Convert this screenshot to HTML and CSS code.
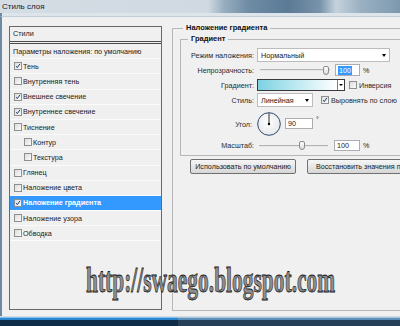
FILE: index.html
```html
<!DOCTYPE html>
<html lang="ru">
<head>
<meta charset="utf-8">
<title>Стиль слоя</title>
<link rel="stylesheet" href="styles.css">
</head>
<body>
<div class="window">
  <div class="titlebar"><span class="title">Стиль слоя</span></div>
  <div class="frame-top"></div>
  <div class="dialog">
    <div class="styles-panel">
      <div class="panel-head">Стили</div>
      <div class="panel-list">
        <div class="row plain">Параметры наложения: по умолчанию</div>
        <div class="row"><span class="cb"><svg viewBox="0 0 8 8"><polyline points="1.6,4.2 3.1,6.2 6.6,1.2"/></svg></span>Тень</div>
        <div class="row"><span class="cb"></span>Внутренняя тень</div>
        <div class="row"><span class="cb"><svg viewBox="0 0 8 8"><polyline points="1.6,4.2 3.1,6.2 6.6,1.2"/></svg></span>Внешнее свечение</div>
        <div class="row"><span class="cb"><svg viewBox="0 0 8 8"><polyline points="1.6,4.2 3.1,6.2 6.6,1.2"/></svg></span>Внутреннее свечение</div>
        <div class="row"><span class="cb"></span>Тиснение</div>
        <div class="row sub"><span class="cb"></span>Контур</div>
        <div class="row sub"><span class="cb"></span>Текстура</div>
        <div class="row"><span class="cb"></span>Глянец</div>
        <div class="row"><span class="cb"></span>Наложение цвета</div>
        <div class="row active"><span class="cb"><svg viewBox="0 0 8 8"><polyline points="1.6,4.2 3.1,6.2 6.6,1.2"/></svg></span>Наложение градиента</div>
        <div class="row"><span class="cb"></span>Наложение узора</div>
        <div class="row"><span class="cb"></span>Обводка</div>
      </div>
    </div>

    <fieldset class="group outer">
      <legend>Наложение градиента</legend>
      <fieldset class="group inner">
        <legend>Градиент</legend>
        <div class="field f1">
          <span class="lbl">Режим наложения:</span>
          <div class="select sel-mode"><span>Нормальный</span><span class="arrow"></span></div>
        </div>
        <div class="field f2">
          <span class="lbl">Непрозрачность:</span>
          <div class="slider s-opacity"><span class="track"></span><span class="thumb"></span></div>
          <div class="num n-opacity"><span class="sel">100</span></div>
          <span class="unit">%</span>
        </div>
        <div class="field f3">
          <span class="lbl">Градиент:</span>
          <div class="grad"><span class="grad-fill"></span><span class="grad-drop"><span class="arrow small"></span></span></div>
          <span class="cb cb-inv"></span><span class="cb-text">Инверсия</span>
        </div>
        <div class="field f4">
          <span class="lbl">Стиль:</span>
          <div class="select sel-style"><span>Линейная</span><span class="arrow"></span></div>
          <span class="cb cb-align"><svg viewBox="0 0 8 8"><polyline points="1.6,4.2 3.1,6.2 6.6,1.2"/></svg></span><span class="cb-text">Выровнять по слою</span>
        </div>
        <div class="field f5">
          <span class="lbl lbl-angle">Угол:</span>
          <svg class="dial" viewBox="0 0 24 24">
            <defs>
              <radialGradient id="dialfill" cx="0.45" cy="0.4" r="0.7">
                <stop offset="0" stop-color="#ffffff"/>
                <stop offset="1" stop-color="#e2e4e6"/>
              </radialGradient>
            </defs>
            <circle cx="12" cy="12" r="11.3" fill="url(#dialfill)" stroke="#2c4c6b" stroke-width="1"/>
            <line x1="12" y1="12" x2="12" y2="1.2" stroke="#1a1a1a" stroke-width="0.9"/>
            <circle cx="12" cy="12" r="1.2" fill="#000"/>
          </svg>
          <div class="num n-angle">90</div>
          <span class="deg">°</span>
        </div>
        <div class="field f6">
          <span class="lbl">Масштаб:</span>
          <div class="slider s-scale"><span class="track"></span><span class="thumb"></span></div>
          <div class="num n-scale">100</div>
          <span class="unit">%</span>
        </div>
      </fieldset>
      <div class="buttons">
        <button class="btn btn1">Использовать по умолчанию</button>
        <button class="btn btn2">Восстановить значения по умолчанию</button>
      </div>
    </fieldset>
  </div>
  <div class="taskbar"><span class="tb-btn"></span></div>
  <div class="watermark">http://swaego.blogspot.com</div>
</div>
</body>
</html>
```

FILE: styles.css
```css
* { box-sizing: border-box; }
html, body { margin: 0; padding: 0; }
body {
  width: 400px;
  height: 326px;
  overflow: hidden;
  background: #f0f0f0;
  font-family: "Liberation Sans", Arial, sans-serif;
  font-size: 7.2px;
  color: #222;
}
.window {
  position: relative;
  width: 400px;
  height: 326px;
  display: flex;
  flex-direction: column;
  overflow: hidden;
}
.titlebar {
  flex: none;
  height: 13px;
  padding-left: 2px;
  display: flex;
  align-items: center;
  background: linear-gradient(90deg, #d4dce4 0%, #d0d9e1 52%, #98aec0 56%, #6f8ca5 62%, #5b7a95 72%, #7893aa 80%, #c5d2dc 84%, #9bb1c3 90%, #7d98ae 100%);
}
.title { font-size: 8px; color: #1a1a1a; }
.frame-top {
  flex: none;
  height: 4px;
  background: #dde4ea;
  border-bottom: 1px solid #c2ccd4;
  border-left: 2px solid #6e8aa2;
}
.dialog {
  flex: none;
  height: 299px;
  display: flex;
  align-items: flex-start;
  padding-left: 7px;
  border-left: 2px solid #6e8aa2;
  background: #f0f0f0;
}

/* left styles list */
.styles-panel {
  flex: none;
  width: 153px;
  height: 284px;
  margin-top: 9px;
  border: 1px solid #686868;
}
.panel-head {
  height: 17px;
  line-height: 14px;
  padding-left: 3px;
  border-bottom: 3px double #4c4c4c;
}
.row {
  height: 15.2px;
  display: flex;
  align-items: center;
  padding-left: 4px;
  border-bottom: 1px solid #fbfbfb;
  white-space: nowrap;
}
.row.plain { padding-left: 3px; }
.row.sub { padding-left: 14px; }
.row.active { background: #3399ff; color: #fff; font-weight: bold; }

.cb {
  flex: none;
  width: 8px;
  height: 8px;
  margin-right: 1px;
  border: 1px solid #8e8f8f;
  background: linear-gradient(135deg, #dcdcdc, #fbfbfb);
  display: flex;
}
.cb svg { width: 100%; height: 100%; }
.cb polyline { fill: none; stroke: #1e3c70; stroke-width: 1.3; }

/* group boxes */
.group {
  margin: 0;
  min-width: 0;
  border: 1px solid #b6b6b6;
}
.group > legend {
  padding: 0 3px;
  line-height: 10px;
  font-size: 7.5px;
  font-weight: bold;
  color: #111;
}
.outer {
  flex: none;
  width: 260px;
  height: 288px;
  margin: 6px 0 0 10px;
  padding: 0 0 0 7px;
}
.outer > legend { margin-left: 3px; }
.inner {
  height: 122px;
  margin: 1px 0 0 0;
  padding: 0;
}
.inner > legend { margin-left: 7px; }

.field {
  display: flex;
  align-items: center;
  white-space: nowrap;
}
.f1 { margin-top: 4px; height: 14px; }
.f2 { margin-top: 2px; height: 12px; }
.f3 { margin-top: 3px; height: 12px; }
.f4 { margin-top: 2px; height: 14px; }
.f5 { margin-top: 5px; height: 24px; }
.f6 { margin-top: 4px; height: 11px; }

.lbl {
  flex: none;
  width: 73px;
  margin-right: 3px;
  text-align: right;
  color: #2a2a2a;
}
.lbl-angle { width: 71px; margin-right: 5px; }

.select {
  flex: none;
  height: 100%;
  background: #fff;
  border: 1px solid #bcbcbc;
  display: flex;
  align-items: center;
  justify-content: space-between;
  padding: 0 3px 0 3px;
}
.sel-mode { width: 133px; }
.sel-style { width: 56px; }
.arrow {
  width: 0;
  height: 0;
  border-left: 2.5px solid transparent;
  border-right: 2.5px solid transparent;
  border-top: 3px solid #000;
}
.arrow.small {
  border-left-width: 2px;
  border-right-width: 2px;
  border-top-width: 2.5px;
}

.slider {
  flex: none;
  position: relative;
  height: 100%;
}
.s-opacity { width: 76px; }
.s-scale { width: 74px; }
.track {
  position: absolute;
  top: 50%;
  height: 2px;
  margin-top: -1px;
  background: #e6e6e6;
  border-top: 1px solid #b4b4b4;
}
.s-opacity .track { left: 3px; right: 3px; }
.s-scale .track { left: 2px; right: 3px; }
.thumb {
  position: absolute;
  top: 50%;
  width: 6px;
  height: 9px;
  margin-top: -4.5px;
  border: 1px solid #8a8a8a;
  border-radius: 2px 2px 3px 3px;
  background: linear-gradient(#ffffff, #dcdcdc);
}
.s-opacity .thumb { left: 66px; }
.s-scale .thumb { left: 42px; }

.num {
  flex: none;
  background: #fff;
  border: 1px solid #abadb3;
  display: flex;
  align-items: center;
  padding-left: 2px;
  color: #222;
}
.n-opacity { width: 25px; height: 12px; margin-left: 2px; }
.n-opacity .sel { background: #3399ff; color: #fff; padding: 0 1px; line-height: 9px; }
.n-angle { width: 28px; height: 11px; margin-left: 4px; margin-top: -2px; }
.n-scale { width: 26px; height: 11px; margin-left: 3px; }
.unit { margin-left: 3px; }
.deg { margin-left: 3px; align-self: flex-start; margin-top: 3px; }

.grad {
  flex: none;
  width: 88px;
  height: 12px;
  border: 1px solid #3a3a3a;
  display: flex;
}
.grad-fill { flex: 1; background: linear-gradient(90deg, #7dd2e2, #c6ecf3 55%, #ffffff); }
.grad-drop {
  flex: none;
  width: 7px;
  border-left: 1px solid #808080;
  background: #fff;
  display: flex;
  align-items: center;
  justify-content: center;
}
.cb-inv { margin-left: 4px; margin-right: 2px; }
.cb-align { margin-left: 8px; margin-right: 2px; }
.cb-text { color: #2a2a2a; }

.dial { flex: none; width: 24px; height: 24px; }

.buttons {
  display: flex;
  gap: 11px;
  margin: 3px 0 0 10px;
}
.btn {
  flex: none;
  height: 15px;
  padding: 0;
  border: 1px solid #707070;
  border-radius: 2px;
  background: linear-gradient(#f6f6f6, #e6e6e6 50%, #d6d6d6);
  font-family: "Liberation Sans", Arial, sans-serif;
  font-size: 7.2px;
  color: #222;
  white-space: nowrap;
}
.btn1 { width: 106px; }
.btn2 { width: 146px; }

.taskbar {
  flex: none;
  height: 10px;
  display: flex;
  background: linear-gradient(#d2d8de 0 1px, #86c6ee 1px 2px, #2a86d2 2px 4px, #0e2c47 4px);
}
.tb-btn {
  margin-left: 178px;
  flex: 1;
  background: linear-gradient(#d2d8de 0 1px, #a6c8e2 1px 2px, #5f90ba 2px 4px, #253f58 4px);
}

.watermark {
  position: absolute;
  left: 86px;
  top: 262px;
  font-family: "Liberation Serif", "Times New Roman", serif;
  font-size: 36px;
  font-weight: bold;
  line-height: 1;
  white-space: nowrap;
  color: #8e8e8e;
  -webkit-text-stroke: 0.8px #141414;
  transform: scaleX(0.596);
  transform-origin: 0 0;
}
```
